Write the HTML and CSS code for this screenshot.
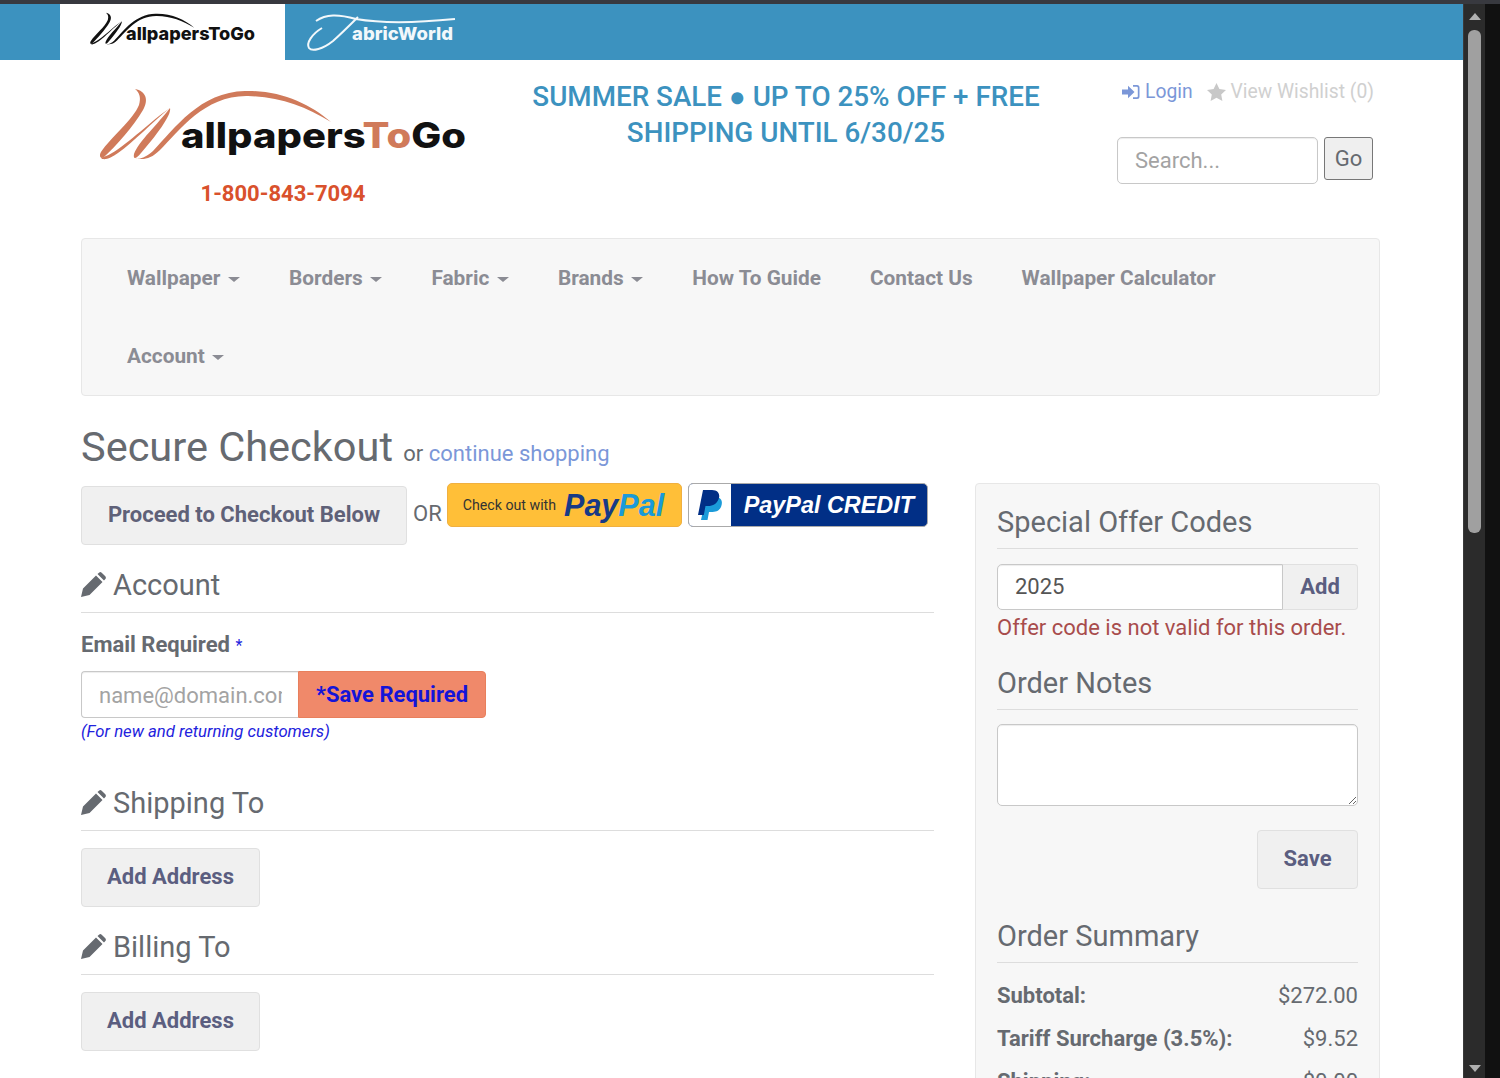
FILE: index.html
```html
<!DOCTYPE html>
<html lang="en">
<head>
    <meta charset="UTF-8">
    <meta name="viewport" content="width=device-width, initial-scale=1.0">
    <title>Secure Checkout</title>
    <link rel="stylesheet" href="styles.css">
</head>
<body>
    <svg class="defs" width="0" height="0">
        <symbol id="wMark" viewBox="95 85 240 80">
            <path d="M135 89 C146 91 149 100 143 110 C133 127 116 146 104 157 C100 160 99 155 101 152 C111 137 133 120 139 105 C141 98 140 93 135 89 Z"/>
            <path d="M101 158 C104 161 111 158 118 153 C134 142 152 122 170 108 C152 120 128 144 112 153 C107 156 103 157 101 158 Z"/>
            <path d="M170 108 C172 115 155 137 141 153 C136 159 133 160 134 154 C139 141 158 124 170 108 Z"/>
            <path d="M135 158 C140 160 146 157 153 151 C175 128 200 92 245 91 C280 90 310 104 331 122 C305 106 280 97 248 96 C205 95 180 130 160 150 C150 160 142 160 135 158 Z"/>
        </symbol>
        <symbol id="pencil" viewBox="0 0 25 25">
            <path d="M0 25 L2 16.500 L15 3.500 L21.500 10 L8.500 23 Z M16.500 2 L18.300 .4 Q19.500 -.3 20.700 .7 L24.300 4.300 Q25.300 5.500 24.600 6.700 L23 8.500 Z"/>
        </symbol>
    </svg>

    <div class="topStrip"></div>
    <div class="window">
        <div class="page">
            <div class="siteTabs">
                <a class="siteTab active">
                    <svg width="225" height="56" viewBox="60 4 225 56">
                        <use href="#wMark" x="88" y="11" width="108" height="36" fill="#111"/>
                        <text x="126" y="40" class="tabText" textLength="129" lengthAdjust="spacingAndGlyphs">allpapersToGo</text>
                    </svg>
                </a>
                <a class="siteTab">
                    <svg width="180" height="56" viewBox="285 4 180 56">
                        <path d="M322 28 C312 34 306 43 309 48 C312 52 323 49 333 41 C342 33 350 25 358 17 M316 21 C326 14 338 14 356 19 C385 24 425 22 455 19" fill="none" stroke="#f2f8fb" stroke-width="2"/>
                        <text x="352" y="40" class="tabText white" textLength="101" lengthAdjust="spacingAndGlyphs">abricWorld</text>
                    </svg>
                </a>
            </div>

            <header class="siteHeader">
                <div class="brand">
                    <svg class="brandLogo" width="386" height="86" viewBox="90 82 386 86">
                        <use href="#wMark" x="95" y="85" width="240" height="80" fill="#d07a5a"/>
                        <text x="181" y="148" class="logoText" textLength="285" lengthAdjust="spacingAndGlyphs">allpapers<tspan fill="#d07a5a">To</tspan>Go</text>
                    </svg>
                    <div class="phone">1-800-843-7094</div>
                </div>
                <div class="promo">SUMMER SALE ● UP TO 25% OFF + FREE<br>SHIPPING UNTIL 6/30/25</div>
                <div class="headerTools">
                    <div class="userLinks">
                        <a class="loginLink">
                            <svg width="18" height="16" viewBox="0 0 18 16"><path d="M0 5.500 H6 V1.800 L12.500 8 L6 14.200 V10.500 H0 Z M11 1 H15 Q17.500 1 17.500 3.500 V12.500 Q17.500 15 15 15 H11 V13.300 H14.800 Q15.800 13.300 15.800 12.300 V3.700 Q15.800 2.700 14.800 2.700 H11 Z"/></svg>
                            Login
                        </a>
                        <a class="wishLink">
                            <svg width="19" height="18" viewBox="0 0 19 18"><path d="M9.500 0 L12.400 6 L19 6.900 L14.200 11.400 L15.400 18 L9.500 14.800 L3.600 18 L4.800 11.400 L0 6.900 L6.600 6 Z"/></svg>
                            View Wishlist (0)
                        </a>
                    </div>
                    <form class="searchForm">
                        <input class="searchInput" type="text" placeholder="Search...">
                        <button class="goBtn" type="button">Go</button>
                    </form>
                </div>
            </header>

            <nav class="mainNav">
                <a>Wallpaper <i class="caret"></i></a>
                <a>Borders <i class="caret"></i></a>
                <a>Fabric <i class="caret"></i></a>
                <a>Brands <i class="caret"></i></a>
                <a>How To Guide</a>
                <a>Contact Us</a>
                <a>Wallpaper Calculator</a>
                <a>Account <i class="caret"></i></a>
            </nav>

            <h1 class="pageTitle">Secure Checkout <small>or <a>continue shopping</a></small></h1>

            <div class="checkoutCols">
                <div class="leftCol">
                    <div class="expressRow">
                        <button class="btn proceedBtn" type="button">Proceed to Checkout Below</button>
                        <span class="orText">OR</span>
                        <a class="paypalBtn">
                            <span class="ppCheck">Check out with</span>
                            <span class="ppWord"><b class="navy">Pay</b><b class="sky">Pal</b></span>
                        </a>
                        <a class="creditBtn">
                            <span class="creditIcon">
                                <svg width="26" height="32" viewBox="0 0 26 32">
                                    <path fill="#1b9bd9" d="M9 8 H18 C25 8 26 13 24 18 C22 22 19 23 14 23 H12 L10.500 31 H4 Z"/>
                                    <path fill="#012f86" d="M6 1 H15 C21 1 23 5 22 9 C20 15 16 17 11 17 H8.500 L6.800 26 H1 Z"/>
                                </svg>
                            </span>
                            <span class="creditWord">PayPal <b>CREDIT</b></span>
                        </a>
                    </div>

                    <h2 class="secHead first"><svg class="pencilIcon"><use href="#pencil"/></svg>Account</h2>
                    <label class="fieldLabel">Email Required <span class="req">*</span></label>
                    <div class="emailGroup">
                        <input class="emailInput" type="text" placeholder="name@domain.com">
                        <button class="saveReq" type="button">*Save Required</button>
                    </div>
                    <div class="helpNote">(For new and returning customers)</div>

                    <h2 class="secHead shipping"><svg class="pencilIcon"><use href="#pencil"/></svg>Shipping To</h2>
                    <button class="btn addBtn" type="button">Add Address</button>

                    <h2 class="secHead billing"><svg class="pencilIcon"><use href="#pencil"/></svg>Billing To</h2>
                    <button class="btn addBtn" type="button">Add Address</button>
                </div>

                <aside class="sidePanel">
                    <h3 class="sideHead">Special Offer Codes</h3>
                    <div class="codeGroup">
                        <input class="codeInput" type="text" value="2025">
                        <button class="codeAdd" type="button">Add</button>
                    </div>
                    <div class="codeError">Offer code is not valid for this order.</div>

                    <h3 class="sideHead notes">Order Notes</h3>
                    <textarea class="notesBox"></textarea>
                    <div class="saveRow"><button class="btn saveBtn" type="button">Save</button></div>

                    <h3 class="sideHead summary">Order Summary</h3>
                    <ul class="totals">
                        <li><b>Subtotal:</b><span>$272.00</span></li>
                        <li><b>Tariff Surcharge (3.5%):</b><span>$9.52</span></li>
                        <li><b>Shipping:</b><span>$0.00</span></li>
                    </ul>
                </aside>
            </div>
        </div>

        <div class="scrollbar">
            <div class="scrollTrack">
                <span class="arrowUp"></span>
                <span class="thumb"></span>
                <span class="arrowDown"></span>
            </div>
        </div>
    </div>
</body>
</html>
```

FILE: styles.css
```css
/* General Styles */
* {
    box-sizing: border-box;
}

html, body {
    margin: 0;
    padding: 0;
    height: 1078px;
    overflow: hidden;
}

body {
    font-family: Roboto, "Liberation Sans", sans-serif;
    font-size: 22px;
    color: #666a70;
    background: #111;
}

.defs {
    display: block;
    height: 0;
}

.topStrip {
    height: 4px;
    background: #38393f;
}

.window {
    display: flex;
    height: 1074px;
}

.page {
    width: 1463px;
    height: 1074px;
    overflow: hidden;
    background: #fff;
}

/* Site tabs */
.siteTabs {
    display: flex;
    height: 56px;
    padding-left: 60px;
    background: #3c92bf;
}

.siteTab {
    display: block;
    height: 56px;
}

.siteTab.active {
    background: #fff;
}

.tabText {
    font-family: Inter, sans-serif;
    font-size: 18px;
    font-weight: 800;
    fill: #111;
}

.tabText.white {
    fill: #f2f8fb;
}

/* Header */
.siteHeader {
    display: flex;
    height: 178px;
    padding-left: 90px;
}

.brand {
    width: 386px;
    padding-top: 22px;
}

.brandLogo {
    display: block;
}

.logoText {
    font-family: Inter, sans-serif;
    font-size: 35px;
    font-weight: 800;
    fill: #111;
}

.phone {
    margin-top: 13px;
    text-align: center;
    font-size: 22px;
    font-weight: 700;
    line-height: 26px;
    color: #d9512c;
}

.promo {
    width: 640px;
    margin-left: -10px;
    padding-top: 19px;
    text-align: center;
    font-size: 27.800px;
    font-weight: 500;
    line-height: 36px;
    color: #3c92bf;
}

.headerTools {
    padding: 19px 0 0 11px;
}

.userLinks {
    display: flex;
    gap: 14px;
    margin-left: 5px;
    line-height: 26px;
    font-size: 19.300px;
}

.loginLink, .wishLink {
    display: flex;
    align-items: center;
    gap: 5px;
}

.loginLink {
    color: #7b97d8;
    fill: #7b97d8;
}

.wishLink {
    color: #d0d0d0;
    fill: #c8c8c8;
}

.searchForm {
    display: flex;
    align-items: flex-start;
    gap: 6px;
    margin-top: 32px;
}

.searchInput {
    width: 201px;
    height: 47px;
    padding: 0 17px;
    border: 1px solid #c8c8c8;
    border-radius: 5px;
    box-shadow: inset 0 1px 1px rgba(0, 0, 0, 0.075);
    font: 22px Roboto, sans-serif;
    color: #555;
}

.searchInput::placeholder, .emailInput::placeholder {
    color: #a3a3a3;
    opacity: 1;
}

.goBtn {
    width: 49px;
    height: 43px;
    padding: 0;
    border: 1.500px solid #777;
    border-radius: 3px;
    background: #efefef;
    font: 22px Roboto, sans-serif;
    color: #666a70;
}

/* Nav */
.mainNav {
    display: flex;
    flex-wrap: wrap;
    width: 1299px;
    height: 158px;
    margin: 0 0 0 81px;
    padding: 0 20.500px;
    border: 1px solid #e7e7e7;
    border-radius: 4px;
    background: #f7f7f7;
}

.mainNav a {
    display: block;
    height: 78px;
    padding: 0 24.500px;
    font-size: 20.800px;
    font-weight: 700;
    line-height: 78px;
    color: #8b8c94;
    white-space: nowrap;
}

.mainNav a:last-child {
    margin-right: 400px;
}

.caret {
    display: inline-block;
    width: 0;
    height: 0;
    margin-left: 2.500px;
    vertical-align: middle;
    border-top: 5px solid #8b8c94;
    border-left: 6px solid transparent;
    border-right: 6px solid transparent;
}

/* Title */
.pageTitle {
    margin: 24px 0 0 81px;
    height: 53px;
    font-size: 41.500px;
    font-weight: 400;
    line-height: 53px;
    color: #666a70;
}

.pageTitle small {
    font-size: 22px;
    margin-left: 0;
}

.pageTitle small a {
    color: #7b97d8;
}

/* Columns */
.checkoutCols {
    display: flex;
    align-items: flex-start;
    margin: 10px 0 0 81px;
    width: 1299px;
}

.leftCol {
    width: 853px;
    margin-right: 41px;
}

.expressRow {
    display: flex;
    align-items: flex-start;
    height: 62px;
}

.btn {
    height: 59px;
    padding: 0 0 2px;
    border: 1px solid #e0e0e0;
    border-radius: 4px;
    background: #f0f0f0;
    font: 700 22px Roboto, sans-serif;
    color: #5b5e80;
}

.proceedBtn {
    width: 326px;
    margin-top: 3px;
    color: #5f6178;
}

.orText {
    margin: 20px 5px 0 6px;
    line-height: 22px;
}

.paypalBtn, .creditBtn {
    display: flex;
    align-items: center;
    height: 44px;
    border-radius: 5px;
}

.paypalBtn {
    width: 235px;
    padding-left: 15px;
    border: 1px solid #f0b040;
    background: #ffbf38;
}

.ppCheck {
    font-size: 14.200px;
    color: #333;
    margin-right: 8px;
    white-space: nowrap;
}

.ppWord {
    font-family: "Liberation Sans", sans-serif;
    font-size: 30.500px;
    font-style: italic;
}

.navy {
    color: #173a86;
}

.sky {
    color: #1a9ad9;
}

.creditBtn {
    width: 240px;
    margin-left: 6px;
    overflow: hidden;
    border: 1px solid #aaa;
    background: #012f86;
}

.creditIcon {
    display: flex;
    align-items: center;
    justify-content: center;
    width: 42px;
    height: 44px;
    background: #fff;
}

.creditWord {
    margin-left: 13px;
    font-family: "Liberation Sans", sans-serif;
    font-size: 23.400px;
    font-style: italic;
    font-weight: 700;
    color: #fff;
    white-space: nowrap;
}

.secHead {
    display: flex;
    align-items: center;
    gap: 7px;
    height: 51px;
    margin: 0;
    border-bottom: 1px solid #ddd;
    font-size: 29px;
    font-weight: 400;
    line-height: 40px;
    color: #666a70;
    padding-bottom: 5px;
}

.secHead.first {
    margin-top: 17px;
}

.secHead.shipping {
    margin-top: 37px;
}

.secHead.billing {
    margin-top: 17px;
}

.pencilIcon {
    width: 25px;
    height: 25px;
    fill: #666a70;
}

.addBtn {
    display: block;
    width: 179px;
    margin-top: 17px;
}

.fieldLabel {
    display: block;
    margin-top: 18px;
    font-weight: 700;
    line-height: 28px;
}

.req {
    color: #2222dd;
    font-size: 16px;
    font-weight: 400;
    vertical-align: 1px;
}

.emailGroup {
    display: flex;
    margin-top: 11px;
}

.emailInput {
    width: 217px;
    height: 47px;
    padding: 2px 16px 0 17px;
    border: 1px solid #c8c8c8;
    border-right: none;
    border-radius: 4px 0 0 4px;
    box-shadow: inset 0 1px 1px rgba(0, 0, 0, 0.075);
    font: 22px Roboto, sans-serif;
}

.saveReq {
    width: 188px;
    height: 47px;
    padding: 0;
    border: 1px solid #e87f5c;
    border-radius: 0 4px 4px 0;
    background: #f0896a;
    font: 700 22px Roboto, sans-serif;
    color: #1414d8;
}

.helpNote {
    margin-top: 3px;
    font-size: 16.700px;
    font-style: italic;
    line-height: 22px;
    color: #2222dd;
}

/* Side panel */
.sidePanel {
    width: 405px;
    height: 620px;
    margin-top: 0;
    padding: 15px 21px 0;
    border: 1px solid #e7e7e7;
    border-radius: 4px;
    background: #f7f7f7;
}

.sideHead {
    height: 50px;
    margin: 0;
    border-bottom: 1px solid #ddd;
    font-size: 29px;
    font-weight: 400;
    line-height: 46px;
    color: #666a70;
}

.sideHead.notes {
    margin-top: 18px;
    height: 49px;
    line-height: 44px;
}

.sideHead.summary {
    margin-top: 24px;
}

.codeGroup {
    display: flex;
    margin-top: 15px;
}

.codeInput {
    width: 286px;
    height: 46px;
    padding: 0 17px 2px;
    border: 1px solid #c8c8c8;
    border-radius: 5px 0 0 5px;
    box-shadow: inset 0 1px 1px rgba(0, 0, 0, 0.075);
    font: 22px Roboto, sans-serif;
    color: #555;
    background: #fff;
}

.codeAdd {
    width: 75px;
    height: 46px;
    padding: 0 0 2px;
    border: 1px solid #e0e0e0;
    border-left: none;
    border-radius: 0 4px 4px 0;
    background: #f0f0f0;
    font: 700 22px Roboto, sans-serif;
    color: #5b5e80;
}

.codeError {
    margin-top: 3px;
    line-height: 30px;
    color: #a84c4c;
}

.notesBox {
    display: block;
    width: 361px;
    height: 82px;
    margin-top: 14px;
    border: 1px solid #c8c8c8;
    border-radius: 5px;
    box-shadow: inset 0 1px 1px rgba(0, 0, 0, 0.075);
    background: #fff;
}

.saveRow {
    display: flex;
    justify-content: flex-end;
    margin-top: 24px;
}

.saveBtn {
    width: 101px;
}

.totals {
    list-style: none;
    margin: 13px 0 0;
    padding: 0;
}

.totals li {
    display: flex;
    justify-content: space-between;
    height: 43px;
    line-height: 40px;
}

/* Scrollbar */
.scrollbar {
    width: 37px;
    height: 1074px;
    background: #111;
}

.scrollTrack {
    display: flex;
    flex-direction: column;
    align-items: center;
    width: 22px;
    height: 1074px;
    padding-top: 9px;
    border-left: 1px solid #3a3a3a;
    background: #2b2b2b;
}

.arrowUp, .arrowDown {
    width: 0;
    height: 0;
    border-left: 6px solid transparent;
    border-right: 6px solid transparent;
}

.arrowUp {
    border-bottom: 7px solid #b0b0b0;
}

.arrowDown {
    margin-top: 532px;
    border-top: 7px solid #b0b0b0;
}

.thumb {
    display: block;
    width: 13px;
    height: 503px;
    margin-top: 10px;
    border-radius: 6px;
    background: #a0a0a0;
}
```
